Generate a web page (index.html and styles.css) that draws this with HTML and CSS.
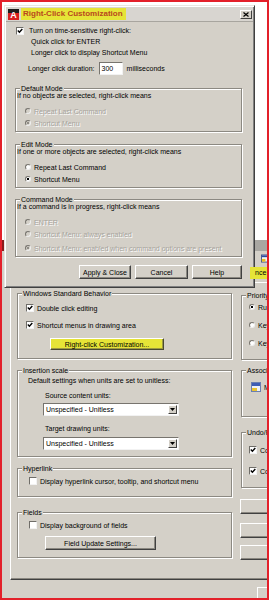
FILE: index.html
```html
<!DOCTYPE html>
<html>
  <head>
    <title>Right-Click Customization</title>
    <link rel="stylesheet" href="styles.css">
  </head>
  <body>
    <div class="frame">
      <div class="options">
        <div class="opt-titlebar">
          <svg class="app-icon" viewBox="0 0 11 11" width="11" height="11">
            <rect width="11" height="11" fill="#8c1c1c" />
          </svg>
        </div>
        <div class="opt-header">
          <svg class="dwg-icon" viewBox="0 0 9 9" width="8" height="9">
            <rect x="0.5" y="0.5" width="8" height="8" fill="#f4f4f4" stroke="#3a4f8c" />
            <rect x="1" y="1" width="7" height="2" fill="#2d4aa0" />
            <rect x="1" y="5" width="4" height="3" fill="#e8c020" />
          </svg>
          <span>Current drawing: Drawing1.dwg</span>
        </div>
        <div class="opt-tabs"></div>
        <div class="tab-page">
          <div class="col-left">
            <div class="group wsb">
              <div class="group-title">Windows Standard Behavior</div>
              <div class="row check-row first">
                <span class="check on"><svg viewBox="0 0 6 6" width="6" height="6"><path d="M0.8 2.6 L2.4 4.3 L5.3 1" /></svg></span>
                <span>Double click editing</span>
              </div>
              <div class="row check-row">
                <span class="check on"><svg viewBox="0 0 6 6" width="6" height="6"><path d="M0.8 2.6 L2.4 4.3 L5.3 1" /></svg></span>
                <span>Shortcut menus in drawing area</span>
              </div>
              <button class="btn btn-rc marked">Right-click Customization...</button>
            </div>

            <div class="group insertion">
              <div class="group-title">Insertion scale</div>
              <div class="text-line unitless">Default settings when units are set to unitless:</div>
              <div class="text-line units-label first">Source content units:</div>
              <div class="select">
                <span>Unspecified - Unitless</span>
                <span class="select-arrow"><svg viewBox="0 0 5 3" width="5" height="3"><polygon points="0,0 5,0 2.5,3" /></svg></span>
              </div>
              <div class="text-line units-label second">Target drawing units:</div>
              <div class="select">
                <span>Unspecified - Unitless</span>
                <span class="select-arrow"><svg viewBox="0 0 5 3" width="5" height="3"><polygon points="0,0 5,0 2.5,3" /></svg></span>
              </div>
            </div>

            <div class="group hyperlink">
              <div class="group-title">Hyperlink</div>
              <div class="row check-row">
                <span class="check"></span>
                <span>Display hyperlink cursor, tooltip, and shortcut menu</span>
              </div>
            </div>

            <div class="group fields">
              <div class="group-title">Fields</div>
              <div class="row check-row">
                <span class="check"></span>
                <span>Display background of fields</span>
              </div>
              <button class="btn btn-fields">Field Update Settings...</button>
            </div>
          </div>

          <div class="col-right">
            <div class="group priority">
              <div class="group-title">Priority for Coordinate Data Entry</div>
              <div class="row radio-row"><span class="radio on"></span><span>Running object snap</span></div>
              <div class="row radio-row"><span class="radio"></span><span>Keyboard entry</span></div>
              <div class="row radio-row"><span class="radio"></span><span>Keyboard entry except scripts</span></div>
            </div>

            <div class="group assoc">
              <div class="group-title">Associative Dimensioning</div>
              <div class="row assoc-row">
                <svg class="assoc-icon" viewBox="0 0 10 10" width="10" height="10">
                  <rect x="0.5" y="0.5" width="9" height="9" fill="#eef2f8" stroke="#6a7fb0" />
                  <rect x="1" y="1" width="8" height="3" fill="#3d5db4" />
                  <rect x="1" y="6" width="5" height="3" fill="#e9c232" />
                </svg>
                <span>Make new dimensions associative</span>
              </div>
            </div>

            <div class="group undo">
              <div class="group-title">Undo/Redo</div>
              <div class="row check-row">
                <span class="check on"><svg viewBox="0 0 6 6" width="6" height="6"><path d="M0.8 2.6 L2.4 4.3 L5.3 1" /></svg></span>
                <span>Combine zoom and pan commands</span>
              </div>
              <div class="row check-row">
                <span class="check on"><svg viewBox="0 0 6 6" width="6" height="6"><path d="M0.8 2.6 L2.4 4.3 L5.3 1" /></svg></span>
                <span>Combine layer property change</span>
              </div>
            </div>

            <button class="btn btn-side first">Hidden Line Settings...</button>
            <button class="btn btn-side">Lineweight Settings...</button>
            <button class="btn btn-side last">Edit Scale List...</button>
          </div>
        </div>
        <div class="opt-footer">
          <button class="btn btn-ok">OK</button>
        </div>
      </div>

      <div class="dialog">
        <div class="titlebar">
          <svg class="app-icon" viewBox="0 0 11 11" width="11" height="11">
            <rect width="11" height="11" fill="#d61f1f" />
            <rect width="11" height="4" fill="#1c1c1c" />
            <text x="5.5" y="8.5" font-size="9" font-weight="bold" fill="#ffffff" text-anchor="middle" font-family="Liberation Sans">A</text>
          </svg>
          <span class="title marked">Right-Click Customization</span>
          <span class="close-btn"><svg viewBox="0 0 6 5" width="6" height="5"><path d="M0.5 0.5 L5.5 4.5 M5.5 0.5 L0.5 4.5" /></svg></span>
        </div>
        <div class="dialog-body">
          <div class="line">
            <span class="check on"><svg viewBox="0 0 6 6" width="6" height="6"><path d="M0.8 2.6 L2.4 4.3 L5.3 1" /></svg></span>
            <span>Turn on time-sensitive right-click:</span>
          </div>
          <div class="line sub">Quick click for ENTER</div>
          <div class="line sub">Longer click to display Shortcut Menu</div>
          <div class="duration">
            <span>Longer click duration:</span>
            <span class="textbox">300</span>
            <span>milliseconds</span>
          </div>

          <div class="group mode first-mode">
            <div class="group-title">Default Mode</div>
            <div class="text-line">If no objects are selected, right-click means</div>
            <div class="row radio-row first disabled"><span class="radio"></span><span>Repeat Last Command</span></div>
            <div class="row radio-row disabled"><span class="radio on"></span><span>Shortcut Menu</span></div>
          </div>

          <div class="group mode">
            <div class="group-title">Edit Mode</div>
            <div class="text-line">If one or more objects are selected, right-click means</div>
            <div class="row radio-row first"><span class="radio"></span><span>Repeat Last Command</span></div>
            <div class="row radio-row"><span class="radio on"></span><span>Shortcut Menu</span></div>
          </div>

          <div class="group mode command">
            <div class="group-title">Command Mode</div>
            <div class="text-line">If a command is in progress, right-click means</div>
            <div class="row radio-row first disabled"><span class="radio"></span><span>ENTER</span></div>
            <div class="row radio-row disabled"><span class="radio"></span><span>Shortcut Menu: always enabled</span></div>
            <div class="row radio-row last disabled"><span class="radio on"></span><span>Shortcut Menu: enabled when command options are present</span></div>
          </div>

          <div class="dialog-buttons">
            <button class="btn btn-apply">Apply &amp; Close</button>
            <button class="btn btn-cancel">Cancel</button>
            <button class="btn btn-help">Help</button>
          </div>
        </div>
      </div>

      <span class="tab-mark">nce</span>
    </div>
  </body>
</html>
```

FILE: styles.css
```css
body {
  margin: 0;
  background-color: #ffffff;
  font-family: "Liberation Sans", Arial, sans-serif;
  font-size: 7px;
  color: #000000;
}
.frame {
  position: relative;
  width: 265px;
  height: 596px;
  border: 2px solid #e3202a;
  overflow: hidden;
}

/* shared window bits */
.group {
  border: 1px solid #8c8982;
  box-shadow: inset 1px 1px #ffffff, 1px 1px #ffffff;
}
.group-title {
  width: max-content;
  margin: -4px 0 -2px 4px;
  padding: 0 1px;
  line-height: 8px;
  background-color: #d4d0c8;
}
.row {
  display: flex;
  align-items: center;
  gap: 3px;
  height: 12px;
  white-space: nowrap;
}
.text-line {
  height: 9px;
  line-height: 9px;
  white-space: nowrap;
}
.check {
  display: flex;
  align-items: center;
  justify-content: center;
  flex-shrink: 0;
  width: 6px;
  height: 6px;
  background-color: #ffffff;
  border: 1px solid;
  border-color: #6f6d68 #f2f2f2 #f2f2f2 #6f6d68;
}
.check svg path {
  fill: none;
  stroke: #000000;
  stroke-width: 1.4;
}
.radio {
  flex-shrink: 0;
  width: 4px;
  height: 4px;
  border-radius: 50%;
  background-color: #ffffff;
  border: 1px solid;
  border-color: #77746e #eeeeee #eeeeee #77746e;
}
.radio.on {
  background: radial-gradient(circle, #000000 0 1.1px, #ffffff 1.5px);
}
.disabled {
  color: #a6a39c;
  text-shadow: 1px 1px #ffffff;
}
.disabled .radio {
  background-color: #d4d0c8;
}
.disabled .radio.on {
  background: radial-gradient(circle, #8f8c86 0 1.1px, #d4d0c8 1.5px);
}
.btn {
  display: block;
  box-sizing: border-box;
  margin: 0;
  padding: 0;
  font-family: "Liberation Sans", Arial, sans-serif;
  font-size: 7px;
  color: #000000;
  background-color: #d4d0c8;
  border: 1px solid;
  border-color: #ffffff #404040 #404040 #ffffff;
  box-shadow: inset -1px -1px #8a8780;
  white-space: nowrap;
  overflow: hidden;
}
.marked {
  background-color: #e6e437;
}

/* background Options window */
.options {
  position: absolute;
  left: 0;
  top: 238px;
  width: 400px;
  height: 380px;
  background-color: #d4d0c8;
}
.opt-titlebar {
  display: flex;
  align-items: center;
  height: 11px;
  background-color: #a9a7a2;
}
.opt-header {
  display: flex;
  align-items: center;
  gap: 3px;
  height: 14px;
  padding-left: 259px;
  white-space: nowrap;
}
.opt-tabs {
  height: 17px;
}
.tab-page {
  display: flex;
  gap: 9px;
  box-sizing: border-box;
  width: 385px;
  height: 298px;
  margin-left: 8px;
  padding: 10px 0 0 6px;
  border: 1px solid;
  border-color: #ffffff #404040 #404040 #ffffff;
  box-shadow: inset -1px -1px #8a8780;
}
.col-left {
  flex-shrink: 0;
  width: 215px;
}
.col-right {
  flex-shrink: 0;
  width: 140px;
  padding-top: 2px;
}
.wsb .check-row {
  margin: 5px 0 0 8px;
}
.wsb .check-row.first {
  margin-top: 6px;
}
.btn-rc {
  width: 114px;
  height: 12px;
  margin: 7px 0 8px 32px;
  border-color: #ffffff #4a4a30 #4a4a30 #ffffff;
  box-shadow: inset -1px -1px #9c9a40;
}
.insertion {
  margin-top: 11px;
  padding-bottom: 6px;
}
.unitless {
  margin: 3px 0 0 10px;
}
.units-label {
  margin-left: 27px;
}
.units-label.first {
  margin-top: 6px;
}
.units-label.second {
  margin-top: 8px;
}
.select {
  display: flex;
  align-items: center;
  justify-content: space-between;
  box-sizing: border-box;
  width: 136px;
  height: 13px;
  margin: 3px 0 0 25px;
  padding: 0 1px 0 2px;
  background-color: #ffffff;
  border: 1px solid;
  border-color: #77746e #f2f2f2 #f2f2f2 #77746e;
}
.units-label.second + .select {
  margin-top: 4px;
}
.select-arrow {
  display: flex;
  align-items: center;
  justify-content: center;
  box-sizing: border-box;
  width: 9px;
  height: 9px;
  background-color: #d4d0c8;
  border: 1px solid;
  border-color: #ffffff #404040 #404040 #ffffff;
}
.hyperlink {
  margin-top: 11px;
  padding-bottom: 9px;
}
.hyperlink .check-row,
.fields .check-row {
  margin: 4px 0 0 11px;
}
.fields {
  margin-top: 15px;
  padding-bottom: 7px;
}
.btn-fields {
  width: 111px;
  height: 14px;
  margin: 5px 0 0 27px;
}
.priority {
  padding-bottom: 7px;
}
.priority .radio-row {
  height: 18px;
  margin-left: 7px;
}
.assoc {
  margin-top: 10px;
  padding-bottom: 22px;
}
.assoc-row {
  height: 14px;
  margin: 7px 0 0 9px;
}
.undo {
  margin-top: 15px;
  padding-bottom: 10px;
}
.undo .check-row {
  margin: 9px 0 0 7px;
}
.undo .check-row:first-of-type {
  margin-top: 8px;
}
.btn-side {
  width: 140px;
  height: 15px;
  margin: 9px 0 0 -1px;
}
.btn-side.first {
  margin-top: 11px;
}
.btn-side.last {
  margin-top: 7px;
}
.opt-footer {
  padding: 7px 0 0 255px;
}
.btn-ok {
  width: 60px;
  height: 14px;
}

/* Right-Click Customization dialog */
.dialog {
  position: absolute;
  left: 2px;
  top: 3px;
  box-sizing: border-box;
  width: 251px;
  height: 283px;
  padding: 1px;
  background-color: #d4d0c8;
  border: 1px solid;
  border-color: #e8e6e1 #404040 #404040 #e8e6e1;
  box-shadow: inset 1px 1px #ffffff, inset -1px -1px #808080;
}
.titlebar {
  display: flex;
  align-items: center;
  height: 14px;
  padding: 0 1px 0 1px;
  background-color: #d8d5d0;
  border-bottom: 1px solid #a8a59f;
}
.titlebar .app-icon {
  margin-left: 1px;
}
.title {
  margin-left: 2px;
  padding: 0 3px 0 2px;
  line-height: 12px;
  font-size: 8px;
  font-weight: bold;
  color: #b8481e;
}
.close-btn {
  display: flex;
  align-items: center;
  justify-content: center;
  box-sizing: border-box;
  width: 12px;
  height: 9px;
  margin-left: auto;
  background-color: #d4d0c8;
  border: 1px solid;
  border-color: #ffffff #404040 #404040 #ffffff;
}
.close-btn path {
  stroke: #000000;
  stroke-width: 1.2;
}
.dialog-body {
  padding: 3px 11px 0 9px;
}
.line {
  display: flex;
  align-items: center;
  gap: 5px;
  height: 11px;
  margin-left: 1px;
  white-space: nowrap;
}
.line.sub {
  margin-left: 16px;
}
.duration {
  display: flex;
  align-items: center;
  gap: 4px;
  height: 13px;
  margin: 4px 0 0 13px;
}
.textbox {
  box-sizing: border-box;
  width: 24px;
  height: 13px;
  padding-left: 2px;
  line-height: 11px;
  background-color: #ffffff;
  border: 1px solid;
  border-color: #77746e #f2f2f2 #f2f2f2 #77746e;
}
.mode {
  margin-top: 12px;
  padding-bottom: 2px;
}
.mode.first-mode {
  margin-top: 13px;
}
.mode.command {
  margin-top: 11px;
  padding-bottom: 2px;
}
.mode .text-line {
  margin-left: 1px;
}
.mode .radio-row {
  gap: 3px;
  margin-left: 9px;
}
.mode .radio-row.first {
  margin-top: 5px;
}
.mode .radio-row.last {
  margin-top: 2px;
}
.dialog-buttons {
  display: flex;
  justify-content: flex-end;
  gap: 4px;
  margin-top: 8px;
}
.dialog-buttons .btn {
  height: 14px;
}
.btn-apply {
  width: 52px;
}
.btn-cancel {
  width: 53px;
}
.btn-help {
  width: 50px;
}

/* marker over the tab label */
.tab-mark {
  position: absolute;
  left: 248px;
  top: 265px;
  box-sizing: border-box;
  width: 17px;
  height: 12px;
  padding-left: 5px;
  line-height: 12px;
  background-color: #e6e437;
  overflow: hidden;
}
```
